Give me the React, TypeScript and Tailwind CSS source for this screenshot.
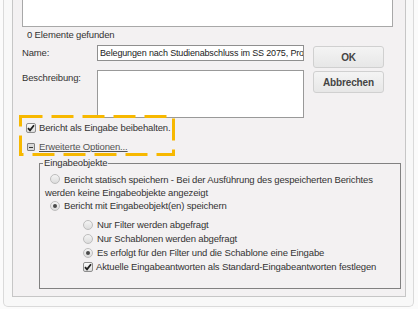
function CheckBox() {
  return (
    <span className="inline-flex h-[10px] w-[10px] shrink-0 items-center justify-center rounded-[2px] border border-[#8e8e8e] bg-gradient-to-b from-[#fbfbfb] to-[#dedede]">
      <svg width="8" height="8" viewBox="0 0 8 8">
        <path d="M1 4.2 L3 6.4 L7 1.2" fill="none" stroke="#1f1f1f" strokeWidth="1.8" />
      </svg>
    </span>
  );
}

function Radio({ checked = false }: { checked?: boolean }) {
  return (
    <span className="inline-flex h-[10px] w-[10px] shrink-0 items-center justify-center rounded-full border border-[#bdbdbd] bg-gradient-to-b from-[#f4f4f4] to-[#dcdcdc]">
      {checked && <span className="h-[4px] w-[4px] rounded-full bg-[#4a4a4a]" />}
    </span>
  );
}

export default function App() {
  return (
    <div className="relative h-[309px] w-[418px] overflow-hidden bg-[#fbfbfb] font-['Liberation_Sans',Arial,sans-serif] text-[9.5px] tracking-[-0.15px] text-[#333]">
      <div className="ml-[3px] h-[307px] w-[411px] rounded-b-[5px] border-x border-b border-[#dadada] bg-[#f8f8f8]">
        <div className="ml-[8px] h-[297px] w-[394px] border-x border-b border-[#c6c6c6] bg-[#f3f1f2]">
          <div className="ml-[9px] h-[27px] w-[371px] border-x border-b border-[#a8a8a8] bg-white" />
          <div className="mt-[1px] pl-[14px] leading-[14px]">0 Elemente gefunden</div>

          <div className="ml-[9px] flex">
            <div className="flex flex-col">
              <div className="mt-[3px] flex items-center">
                <span className="w-[75px] leading-[14px]">Name:</span>
                <div className="h-[16px] w-[207px] overflow-hidden whitespace-nowrap border border-[#8f8f8f] bg-white pl-[2px] text-[9px] leading-[14px] tracking-[-0.15px] text-[#222]">
                  Belegungen nach Studienabschluss im SS 2075, Pro
                </div>
              </div>
              <div className="mt-[9px] flex items-start">
                <span className="mt-[1px] w-[75px] leading-[14px]">Beschreibung:</span>
                <div className="h-[48px] w-[207px] border border-[#999] bg-white" />
              </div>
            </div>
            <div className="ml-[9px] mt-[4px] flex flex-col gap-[3px]">
              <button className="h-[22px] w-[71px] rounded-[3px] border border-[#d0d0d0] bg-gradient-to-b from-[#f4f4f4] to-[#e7e7e7] text-[10px] font-bold text-[#444]">
                OK
              </button>
              <button className="h-[22px] w-[71px] rounded-[3px] border border-[#d0d0d0] bg-gradient-to-b from-[#f4f4f4] to-[#e7e7e7] text-[10px] font-bold text-[#444]">
                Abbrechen
              </button>
            </div>
          </div>

          <div className="mt-[3px] flex h-[14px] items-center pl-[13px]">
            <CheckBox />
            <span className="ml-[3px] leading-[14px]">Bericht als Eingabe beibehalten.</span>
          </div>
          <div className="mt-[5px] flex h-[14px] items-center pl-[14px]">
            <span className="flex h-[8px] w-[8px] items-center justify-center rounded-[1px] border border-[#7e7e7e] bg-[#d9d9d9]">
              <span className="h-[1px] w-[4px] bg-[#333]" />
            </span>
            <span className="ml-[4px] leading-[14px] text-[#555] underline">Erweiterte Optionen...</span>
          </div>

          <fieldset className="ml-[26px] mt-[2px] h-[133px] w-[362px] border border-[#818181]">
            <legend className="ml-[3px] px-[1px] leading-[14px]">Eingabeobjekte</legend>
            <div className="mt-[3px] pl-[5px] leading-[13px]">
              <div>
                <span className="ml-[5px] mr-[4px] inline-flex translate-y-[1px]">
                  <Radio />
                </span>
                Bericht statisch speichern - Bei der Ausführung des gespeicherten Berichtes
              </div>
              <div>werden keine Eingabeobjekte angezeigt</div>
              <div className="flex items-center">
                <span className="ml-[5px] mr-[4px] inline-flex">
                  <Radio checked />
                </span>
                Bericht mit Eingabeobjekt(en) speichern
              </div>
            </div>
            <div className="mt-[6px] pl-[43px] leading-[14px]">
              <div className="flex items-center gap-[4px]">
                <Radio />
                <span>Nur Filter werden abgefragt</span>
              </div>
              <div className="flex items-center gap-[4px]">
                <Radio />
                <span>Nur Schablonen werden abgefragt</span>
              </div>
              <div className="flex items-center gap-[4px]">
                <Radio checked />
                <span>Es erfolgt für den Filter und die Schablone eine Eingabe</span>
              </div>
              <div className="flex items-center gap-[3px]">
                <CheckBox />
                <span>Aktuelle Eingabeantworten als Standard-Eingabeantworten festlegen</span>
              </div>
            </div>
          </fieldset>
        </div>
      </div>

      <svg className="pointer-events-none absolute left-0 top-0" width="418" height="309">
        <rect x="20.5" y="116.5" width="153" height="38" fill="none" stroke="#f7b800" strokeWidth="3" strokeDasharray="22 9" />
      </svg>
    </div>
  );
}
